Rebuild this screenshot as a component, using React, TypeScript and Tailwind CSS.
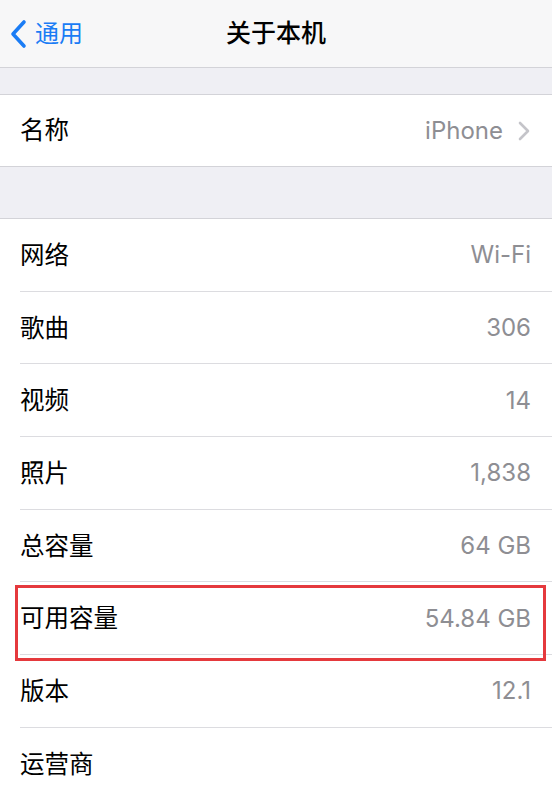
import React from 'react';

const font = { fontFamily: 'Inter, "Noto Sans CJK SC", sans-serif' };

type Row = { label: string; value?: string; chevron?: boolean; highlight?: boolean };

const rows: Row[] = [
  { label: '网络', value: 'Wi-Fi' },
  { label: '歌曲', value: '306' },
  { label: '视频', value: '14' },
  { label: '照片', value: '1,838' },
  { label: '总容量', value: '64 GB' },
  { label: '可用容量', value: '54.84 GB', highlight: true },
  { label: '版本', value: '12.1' },
  { label: '运营商' },
];

const Chevron = () => (
  <svg width="14" height="24" viewBox="0 0 14 24" className="ml-[14px]">
    <path d="M3 4l8 8-8 8" fill="none" stroke="#c4c4c9" strokeWidth="2.6" strokeLinecap="round" strokeLinejoin="round" />
  </svg>
);

const SettingRow = ({ row, last, tall = true }: { row: Row; last?: boolean; tall?: boolean }) => (
  <div className={`relative bg-white ${tall ? 'h-[72.7px]' : 'h-[71px]'}`}>
    <div className="flex h-full items-center justify-between pl-[20px] pr-[21px]">
      <span className="text-[24.5px] text-black">{row.label}</span>
      <div className="flex items-center">
        {row.value && <span className="text-[24px] text-[#8e8e93]">{row.value}</span>}
        {row.chevron && <Chevron />}
      </div>
    </div>
    {!last && <div className="absolute bottom-0 left-[20px] right-0 h-px bg-[#dcdce0]" />}
    {row.highlight && (
      <div className="absolute left-[15px] top-[3px] z-10 h-[76px] w-[531px] border-[3px] border-[#e5393d]" />
    )}
  </div>
);

export default function App() {
  return (
    <div className="h-[790px] w-[552px] overflow-hidden bg-[#efeff4]" style={font}>
      {/* nav bar */}
      <header className="relative flex h-[68px] items-center border-b border-[#d3d3d8] bg-[#f7f7f8]">
        <div className="flex items-center pl-[10px] text-[#1a7cf5]">
          <svg width="17" height="30" viewBox="0 0 17 30">
            <path d="M14 3L3 15l11 12" fill="none" stroke="#1a7cf5" strokeWidth="3.6" strokeLinecap="round" strokeLinejoin="round" />
          </svg>
          <span className="ml-[8px] text-[24px]">通用</span>
        </div>
        <h1 className="pointer-events-none absolute left-0 right-0 text-center text-[25px] font-medium text-black">关于本机</h1>
      </header>

      <div className="h-[26px]" />

      <section className="border-y border-[#d3d3d8]">
        <SettingRow row={{ label: '名称', value: 'iPhone', chevron: true }} last tall={false} />
      </section>

      <div className="h-[51px]" />

      <section className="border-t border-[#d3d3d8]">
        {rows.map((r, i) => (
          <SettingRow key={r.label} row={r} last={i === rows.length - 1} />
        ))}
      </section>
    </div>
  );
}
